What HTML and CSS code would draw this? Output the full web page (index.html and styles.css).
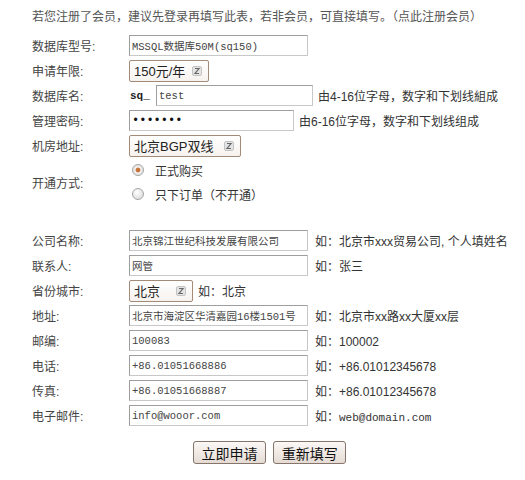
FILE: index.html
```html
<!DOCTYPE html>
<html lang="zh-CN">
<head>
    <meta charset="UTF-8">
    <meta name="viewport" content="width=device-width, initial-scale=1.0">
    <title>数据库申请</title>
    <link rel="stylesheet" href="styles.css">
</head>
<body>
    <div class="page">
        <p class="intro">若您注册了会员，建议先登录再填写此表，若非会员，可直接填写。（点此注册会员）</p>
        <form id="applyForm">
            <table class="form-table">
                <tr>
                    <td class="label">数据库型号:</td>
                    <td><input type="text" class="field w179" value="MSSQL数据库50M(sq150)"></td>
                </tr>
                <tr>
                    <td class="label">申请年限:</td>
                    <td>
                        <div class="select w80">150元/年
                            <svg class="select-icon" width="10" height="10" viewBox="0 0 10 10"><rect x="0.5" y="0.5" width="9" height="9" rx="1.5" fill="#e4e4e4" stroke="#c4c4c4"/><path d="M3 2.5h4L3 7.5h4" fill="none" stroke="#666" stroke-width="1.2"/></svg>
                        </div>
                    </td>
                </tr>
                <tr>
                    <td class="label">数据库名:</td>
                    <td><span class="prefix">sq_</span><input type="text" class="field w157" value="test"><span class="hint">由4-16位字母，数字和下划线組成</span></td>
                </tr>
                <tr>
                    <td class="label">管理密码:</td>
                    <td><input type="password" class="field w165 pwd" value="1234567"><span class="hint">由6-16位字母，数字和下划线组成</span></td>
                </tr>
                <tr>
                    <td class="label">机房地址:</td>
                    <td>
                        <div class="select w112">北京BGP双线
                            <svg class="select-icon" width="10" height="10" viewBox="0 0 10 10"><rect x="0.5" y="0.5" width="9" height="9" rx="1.5" fill="#e4e4e4" stroke="#c4c4c4"/><path d="M3 2.5h4L3 7.5h4" fill="none" stroke="#666" stroke-width="1.2"/></svg>
                        </div>
                    </td>
                </tr>
                <tr>
                    <td class="label">开通方式:</td>
                    <td class="radios">
                        <label class="radio-line"><input type="radio" name="mode" class="radio" checked>正式购买</label>
                        <label class="radio-line"><input type="radio" name="mode" class="radio">只下订单（不开通）</label>
                    </td>
                </tr>
                <tr class="spacer"><td colspan="2"></td></tr>
                <tr>
                    <td class="label">公司名称:</td>
                    <td><input type="text" class="field w179" value="北京锦江世纪科技发展有限公司"><span class="hint wide">如：北京市xxx贸易公司, 个人填姓名</span></td>
                </tr>
                <tr>
                    <td class="label">联系人:</td>
                    <td><input type="text" class="field w179" value="网管"><span class="hint wide">如：张三</span></td>
                </tr>
                <tr>
                    <td class="label">省份城市:</td>
                    <td>
                        <div class="select w64">北京
                            <svg class="select-icon" width="10" height="10" viewBox="0 0 10 10"><rect x="0.5" y="0.5" width="9" height="9" rx="1.5" fill="#e4e4e4" stroke="#c4c4c4"/><path d="M3 2.5h4L3 7.5h4" fill="none" stroke="#666" stroke-width="1.2"/></svg>
                        </div><span class="hint">如：北京</span>
                    </td>
                </tr>
                <tr>
                    <td class="label">地址:</td>
                    <td><input type="text" class="field w179" value="北京市海淀区华清嘉园16楼1501号"><span class="hint wide">如：北京市xx路xx大厦xx层</span></td>
                </tr>
                <tr>
                    <td class="label">邮编:</td>
                    <td><input type="text" class="field w179" value="100083"><span class="hint wide">如：100002</span></td>
                </tr>
                <tr>
                    <td class="label">电话:</td>
                    <td><input type="text" class="field w179" value="+86.01051668886"><span class="hint wide">如：+86.01012345678</span></td>
                </tr>
                <tr>
                    <td class="label">传真:</td>
                    <td><input type="text" class="field w179" value="+86.01051668887"><span class="hint wide">如：+86.01012345678</span></td>
                </tr>
                <tr>
                    <td class="label">电子邮件:</td>
                    <td><input type="text" class="field w179" value="info@wooor.com"><span class="hint wide">如：<span class="mono">web@domain.com</span></span></td>
                </tr>
                <tr>
                    <td></td>
                    <td class="actions">
                        <button type="submit" class="btn">立即申请</button>
                        <button type="reset" class="btn">重新填写</button>
                    </td>
                </tr>
            </table>
        </form>
    </div>
</body>
</html>
```

FILE: styles.css
```css
body {
    margin: 0;
    background-color: #fff;
    color: #333;
    font-family: "Liberation Sans", "Noto Sans CJK SC", sans-serif;
    font-size: 12px;
}
.page {
    padding: 7px 0 0 32px;
}
.intro {
    margin: 0 0 6px 0;
    line-height: 20px;
    color: #555;
}
.form-table {
    border-collapse: collapse;
}
.form-table td {
    padding: 0;
    height: 25px;
    vertical-align: middle;
    white-space: nowrap;
}
.form-table td.label {
    width: 97px;
    color: #444;
}
.field {
    box-sizing: border-box;
    height: 21px;
    margin: 0;
    padding: 0 2px;
    border: 1px solid #c4c4c4;
    border-color: #9e9e9e #c8c8c8 #c8c8c8 #9e9e9e;
    font-family: "Liberation Mono", "Noto Sans CJK SC", monospace;
    font-size: 10.5px;
    color: #444;
    vertical-align: middle;
    outline: none;
}
.pwd {
    color: #111;
    font-size: 12px;
}
.w179 { width: 179px; }
.w157 { width: 157px; }
.w165 { width: 165px; }
.w80 { width: 80px; }
.w112 { width: 112px; }
.w64 { width: 64px; }
.prefix {
    display: inline-block;
    width: 26px;
    margin-left: 1px;
    font-family: "Liberation Mono", monospace;
    font-size: 11px;
    font-weight: bold;
    color: #222;
    vertical-align: middle;
}
.hint {
    margin-left: 5px;
    color: #333;
    vertical-align: middle;
}
.hint.wide {
    margin-left: 7px;
}
.mono {
    font-family: "Liberation Mono", monospace;
    font-size: 11px;
}
.select {
    display: inline-flex;
    align-items: center;
    justify-content: space-between;
    box-sizing: border-box;
    height: 22px;
    padding: 0 6px 0 4px;
    border: 1px solid #a38b78;
    border-radius: 2px;
    background: linear-gradient(#ffffff, #f6f2ef);
    font-size: 13px;
    color: #222;
    vertical-align: middle;
}
.select-icon {
    flex-shrink: 0;
}
.radios {
    padding: 0;
}
.form-table td.radios {
    height: 48px;
}
.radio-line {
    display: flex;
    align-items: center;
    height: 24px;
    color: #333;
}
.radio {
    appearance: none;
    -webkit-appearance: none;
    box-sizing: border-box;
    width: 12px;
    height: 12px;
    margin: 0 11px 0 3px;
    border: 1px solid #a6a6a6;
    border-radius: 50%;
    background: radial-gradient(circle at 40% 35%, #ffffff, #d4d4d4);
}
.radio:checked {
    background: radial-gradient(circle, #c9763e 0, #c9763e 2px, #f2f2f2 2.8px, #d4d4d4 100%);
}
.spacer td {
    height: 22px;
}
.form-table td.actions {
    height: 50px;
    padding-left: 64px;
    vertical-align: top;
    padding-top: 13px;
}
.btn {
    box-sizing: border-box;
    width: 73px;
    height: 23px;
    margin: 0 4px 0 0;
    padding: 0;
    border: 1px solid #86756a;
    border-radius: 3px;
    background: linear-gradient(#fbf8f6, #e5dbd4);
    font-family: "Noto Sans CJK SC", sans-serif;
    font-size: 14px;
    color: #111;
    cursor: pointer;
}
```
